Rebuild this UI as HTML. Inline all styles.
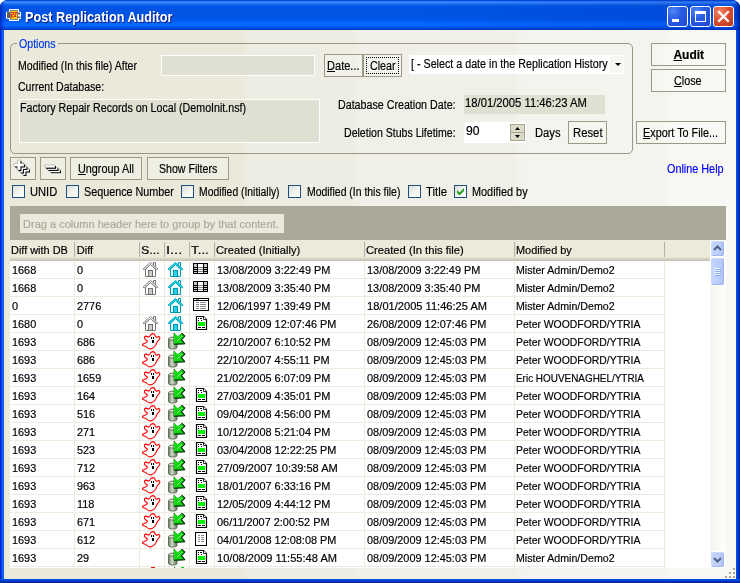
<!DOCTYPE html>
<html><head><meta charset="utf-8"><title>Post Replication Auditor</title>
<style>
html,body{margin:0;padding:0;}
body{width:740px;height:583px;overflow:hidden;background:#fff;position:relative;font-family:'Liberation Sans', sans-serif;font-size:11px;}
div{position:absolute;box-sizing:border-box;}
svg{position:absolute;overflow:visible;}
.t{position:absolute;white-space:nowrap;transform-origin:0 0;-webkit-text-stroke:0.18px currentColor;}

.btn{border:1px solid #9C9985;background:rgba(255,255,255,0.22);}
.chk{border:1px solid #1C5180;background:linear-gradient(135deg,#DCDCD7 0%,#F3F3EF 50%,#FFFFFF 100%);}

</style></head><body>
<div style="left:0px;top:0px;width:740px;height:583px;background:#0A3FD0;border-radius:8px 8px 0 0;"></div>
<div style="left:0px;top:0px;width:740px;height:30px;border-radius:8px 8px 0 0;background:linear-gradient(to bottom,#0040D0 0px,#0A50E0 0.8px,#2F80F8 1.6px,#3A8CFF 2.6px,#1A6EF2 4px,#0058E6 6px,#0054E3 9px,#0054E3 17px,#0058EA 20px,#0466FF 23px,#0466FF 25.5px,#005AF0 27px,#0046D8 28.5px,#0034BC 30px);"></div>
<div style="left:734px;top:1px;width:6px;height:29px;border-radius:0 8px 0 0;background:linear-gradient(to right,rgba(0,30,160,0) 0%,rgba(0,30,160,0.55) 60%,rgba(0,20,130,0.8) 100%);"></div>
<div style="left:0px;top:1px;width:5px;height:29px;border-radius:8px 0 0 0;background:linear-gradient(to left,rgba(0,30,180,0) 0%,rgba(0,30,190,0.5) 70%,rgba(0,25,170,0.7) 100%);"></div>
<div style="left:420px;top:0px;width:320px;height:30px;border-radius:0 8px 0 0;background:linear-gradient(to right,rgba(0,30,170,0) 0%,rgba(0,30,170,0.22) 100%);"></div>
<div style="left:0px;top:30px;width:4px;height:553px;background:linear-gradient(to right,#0019CF 0%,#0031E0 30%,#166AEE 60%,#0054E3 100%);"></div>
<div style="left:736px;top:30px;width:4px;height:553px;background:linear-gradient(to right,#0054E3 0%,#0042D8 40%,#001DA0 100%);"></div>
<div style="left:0px;top:579px;width:740px;height:4px;background:linear-gradient(to bottom,#0054E3 0%,#0040D0 40%,#001DA0 100%);"></div>
<div style="left:4px;top:30px;width:732px;height:549px;background:linear-gradient(to right,#EAE9DA 0px,#EAE9DA 238px,#EDEDE3 246px,#EDEDE3 346px,#F0F0E8 356px,#F0F0E8 508px,#F4F4EE 518px,#F4F4EE 656px,#F7F7F3 668px,#F7F7F3 732px);"></div>
<svg style="left:5px;top:8px" width="17" height="14" viewBox="5 8 17 14"><path d="M9 9 H19 V11.5 L21 12 V19 H19 V21 H9 V19 L6 18.5 V12 L9 11.5 Z" fill="#fff"/><rect x="7" y="12" width="3" height="6" fill="#5C5C5C"/><rect x="18" y="12.5" width="2" height="2" fill="#5C5C5C"/><rect x="18" y="16.5" width="2.5" height="1.5" fill="#5C5C5C"/><rect x="10" y="10" width="8" height="10" fill="#80888C"/><rect x="11" y="11" width="6" height="8" fill="#FFD400"/><path d="M11 12.5 H13.5 V14.5 H11.5 V17 H13.5 M14.5 12.5 H16.5 L14.5 16.5 H16.5" fill="none" stroke="#F02810" stroke-width="1.1"/></svg>
<div style="left:667px;top:6px;width:21px;height:21px;border:1px solid #fff;border-radius:3px;background:radial-gradient(circle at 28% 22%,#5088F6 0%,#2A5CE2 40%,#1C48D0 100%);"></div>
<div style="left:690px;top:6px;width:21px;height:21px;border:1px solid #fff;border-radius:3px;background:radial-gradient(circle at 28% 22%,#5088F6 0%,#2A5CE2 40%,#1C48D0 100%);"></div>
<div style="left:713px;top:6px;width:21px;height:21px;border:1px solid #fff;border-radius:3px;background:radial-gradient(circle at 30% 25%,#F08868 0%,#DC5030 45%,#B83418 100%);"></div>
<div style="left:672px;top:19px;width:7px;height:3px;background:#fff;"></div>
<div style="left:695px;top:11px;width:11px;height:11px;border:1px solid #fff;border-top:3px solid #fff;"></div>
<svg style="left:713px;top:6px" width="21" height="21" viewBox="0 0 21 21"><path d="M6 6 L15 15 M15 6 L6 15" stroke="#fff" stroke-width="2.2" stroke-linecap="square"/></svg>
<div style="left:10px;top:43px;width:623px;height:111px;border:1px solid #9A9884;border-radius:5px;"></div>
<div style="left:17px;top:39px;width:41px;height:10px;background:#EAE9DA;"></div>
<div style="left:161px;top:55px;width:154px;height:21px;border:1px solid #fff;background:#DFE0D1;"></div>
<div class="btn" style="left:324px;top:54px;width:39px;height:23px;"></div>
<div class="btn" style="left:363px;top:54px;width:39px;height:23px;"></div>
<div style="left:366px;top:57px;width:33px;height:17px;border:1px dotted #000;"></div>
<div style="left:409px;top:55px;width:215px;height:19px;background:#fff;"></div>
<div style="left:610px;top:56px;width:13px;height:17px;background:#F6F6F3;"></div>
<svg style="left:615px;top:63px" width="6" height="3" viewBox="0 0 6 3"><path d="M0 0 H6 L3 3 Z" fill="#000"/></svg>
<div style="left:19px;top:99px;width:301px;height:44px;border:1px solid #fff;background:#DFE0D1;"></div>
<div style="left:464px;top:95px;width:141px;height:19px;background:#DFE0D1;"></div>
<div style="left:464px;top:122px;width:62px;height:21px;background:#fff;"></div>
<div style="left:510px;top:124px;width:15px;height:9px;background:#DDDCCB;border:1px solid #A9A793;"></div>
<div style="left:510px;top:132px;width:15px;height:9px;background:#DDDCCB;border:1px solid #A9A793;"></div>
<svg style="left:515px;top:127px" width="5" height="3" viewBox="0 0 5 3"><path d="M0 3 H5 L2.5 0 Z" fill="#000"/></svg>
<svg style="left:515px;top:135px" width="5" height="3" viewBox="0 0 5 3"><path d="M0 0 H5 L2.5 3 Z" fill="#000"/></svg>
<div class="btn" style="left:568px;top:121px;width:39px;height:23px;"></div>
<div class="btn" style="left:651px;top:43px;width:75px;height:23px;"></div>
<div class="btn" style="left:651px;top:69px;width:75px;height:23px;"></div>
<div class="btn" style="left:636px;top:121px;width:90px;height:23px;"></div>
<div class="btn" style="left:10px;top:157px;width:26px;height:23px;"></div>
<div class="btn" style="left:40px;top:157px;width:26px;height:23px;"></div>
<div class="btn" style="left:70px;top:157px;width:72px;height:23px;"></div>
<div class="btn" style="left:147px;top:157px;width:82px;height:23px;"></div>
<svg style="left:14px;top:160.4px" width="18" height="18" viewBox="0 0 18 18"><path d="M3.5 0 H6.5 V3.5 H10 V6.5 H6.5 V10 H3.5 V6.5 H0 V3.5 H3.5 Z" transform="translate(6.0,6.0)" fill="#000"/><path d="M3.5 0 H6.5 V3.5 H10 V6.5 H6.5 V10 H3.5 V6.5 H0 V3.5 H3.5 Z" transform="translate(5.0,5.0)" fill="#fff" stroke="#555" stroke-width="0.35"/><path d="M3.5 0 H6.5 V3.5 H10 V6.5 H6.5 V10 H3.5 V6.5 H0 V3.5 H3.5 Z" transform="translate(3.5,3.5)" fill="#000"/><path d="M3.5 0 H6.5 V3.5 H10 V6.5 H6.5 V10 H3.5 V6.5 H0 V3.5 H3.5 Z" transform="translate(2.5,2.5)" fill="#fff" stroke="#555" stroke-width="0.35"/><path d="M3.5 0 H6.5 V3.5 H10 V6.5 H6.5 V10 H3.5 V6.5 H0 V3.5 H3.5 Z" transform="translate(1.0,1.0)" fill="#000"/><path d="M3.5 0 H6.5 V3.5 H10 V6.5 H6.5 V10 H3.5 V6.5 H0 V3.5 H3.5 Z" transform="translate(0.0,0.0)" fill="#fff" stroke="#555" stroke-width="0.35"/></svg>
<svg style="left:45.2px;top:164.5px" width="18" height="10" viewBox="0 0 18 10"><rect x="6.0" y="5.4" width="10" height="2.8" fill="#000"/><rect x="5.0" y="4.4" width="10" height="2.8" fill="#fff" stroke="#555" stroke-width="0.35"/><rect x="3.5" y="3.2" width="10" height="2.8" fill="#000"/><rect x="2.5" y="2.2" width="10" height="2.8" fill="#fff" stroke="#555" stroke-width="0.35"/><rect x="1.0" y="1.0" width="10" height="2.8" fill="#000"/><rect x="0.0" y="0.0" width="10" height="2.8" fill="#fff" stroke="#555" stroke-width="0.35"/></svg>
<div class="chk" style="left:12px;top:185px;width:13px;height:13px;"></div>
<div class="chk" style="left:66px;top:185px;width:13px;height:13px;"></div>
<div class="chk" style="left:181px;top:185px;width:13px;height:13px;"></div>
<div class="chk" style="left:288px;top:185px;width:13px;height:13px;"></div>
<div class="chk" style="left:408px;top:185px;width:13px;height:13px;"></div>
<div class="chk" style="left:454px;top:185px;width:13px;height:13px;"></div>
<svg style="left:457px;top:188px" width="7" height="7" viewBox="0 0 7 7"><path d="M0 2 V5 L2 7 H3 L7 3 V0 L2.5 4.5 Z" fill="#21A121"/></svg>
<div style="left:10px;top:206px;width:716px;height:362px;background:#fff;"></div>
<div style="left:10px;top:206px;width:716px;height:34px;background:#ACA899;"></div>
<div style="left:20px;top:214px;width:264px;height:19px;background:#EAE9DB;"></div>
<div style="left:10px;top:240px;width:700px;height:21px;background:linear-gradient(to bottom,#EBEADB 0px,#EBEADB 17px,#E2DECD 18px,#D6D2C2 19px,#CBC7B8 20px,#CBC7B8 21px);"></div>
<div style="left:74px;top:242px;width:2px;height:15px;background:#B5B3A1;border-right:1px solid rgba(255,255,255,0.65);"></div>
<div style="left:139px;top:242px;width:2px;height:15px;background:#B5B3A1;border-right:1px solid rgba(255,255,255,0.65);"></div>
<div style="left:164px;top:242px;width:2px;height:15px;background:#B5B3A1;border-right:1px solid rgba(255,255,255,0.65);"></div>
<div style="left:189px;top:242px;width:2px;height:15px;background:#B5B3A1;border-right:1px solid rgba(255,255,255,0.65);"></div>
<div style="left:214px;top:242px;width:2px;height:15px;background:#B5B3A1;border-right:1px solid rgba(255,255,255,0.65);"></div>
<div style="left:364px;top:242px;width:2px;height:15px;background:#B5B3A1;border-right:1px solid rgba(255,255,255,0.65);"></div>
<div style="left:514px;top:242px;width:2px;height:15px;background:#B5B3A1;border-right:1px solid rgba(255,255,255,0.65);"></div>
<div style="left:664px;top:242px;width:2px;height:15px;background:#B5B3A1;border-right:1px solid rgba(255,255,255,0.65);"></div>
<div style="left:710px;top:240px;width:16px;height:328px;background:linear-gradient(to right,#F5F4EF 0%,#FEFEFB 100%);"></div>
<div style="left:710px;top:240px;width:15px;height:17px;border:1px solid #fff;border-radius:3px;background:linear-gradient(to right,#C8D6FC 0%,#BACBFA 70%,#AEC0F4 100%);box-shadow:inset -1px -1px 0 #9FB5EE,inset 1px 1px 0 #CBD8FC;"></div>
<div style="left:710px;top:257px;width:15px;height:29px;border:1px solid #fff;border-radius:3px;background:linear-gradient(to right,#C8D6FC 0%,#BACBFA 70%,#AEC0F4 100%);box-shadow:inset -1px -1px 0 #9FB5EE,inset 1px 1px 0 #CBD8FC;"></div>
<div style="left:710px;top:551px;width:15px;height:17px;border:1px solid #fff;border-radius:3px;background:linear-gradient(to right,#C8D6FC 0%,#BACBFA 70%,#AEC0F4 100%);box-shadow:inset -1px -1px 0 #9FB5EE,inset 1px 1px 0 #CBD8FC;"></div>
<svg style="left:713px;top:245px" width="9" height="6" viewBox="0 0 9 6"><path d="M1 5 L4.5 1.5 L8 5" stroke="#4D6185" stroke-width="2" fill="none"/></svg>
<svg style="left:713px;top:557px" width="9" height="6" viewBox="0 0 9 6"><path d="M1 1 L4.5 4.5 L8 1" stroke="#4D6185" stroke-width="2" fill="none"/></svg>
<div style="left:714px;top:268px;width:6px;height:1px;background:#EEF4FE;"></div>
<div style="left:715px;top:269px;width:6px;height:1px;background:#8CB0F8;"></div>
<div style="left:714px;top:270px;width:6px;height:1px;background:#EEF4FE;"></div>
<div style="left:715px;top:271px;width:6px;height:1px;background:#8CB0F8;"></div>
<div style="left:714px;top:272px;width:6px;height:1px;background:#EEF4FE;"></div>
<div style="left:715px;top:273px;width:6px;height:1px;background:#8CB0F8;"></div>
<div style="left:714px;top:274px;width:6px;height:1px;background:#EEF4FE;"></div>
<div style="left:715px;top:275px;width:6px;height:1px;background:#8CB0F8;"></div>
<div style="left:733px;top:568px;width:2px;height:2px;background:#A5AA92;"></div>
<div style="left:729px;top:572px;width:2px;height:2px;background:#A5AA92;"></div>
<div style="left:733px;top:572px;width:2px;height:2px;background:#A5AA92;"></div>
<div style="left:725px;top:576px;width:2px;height:2px;background:#A5AA92;"></div>
<div style="left:729px;top:576px;width:2px;height:2px;background:#A5AA92;"></div>
<div style="left:733px;top:576px;width:2px;height:2px;background:#A5AA92;"></div>
<svg width="0" height="0" style="left:0;top:0"><defs><linearGradient id="cg" x1="0" x2="1" y1="0" y2="0"><stop offset="0" stop-color="#66765E"/><stop offset="0.4" stop-color="#D2DACA"/><stop offset="1" stop-color="#66765E"/></linearGradient></defs></svg>
<div style="left:10px;top:261px;width:655px;height:307px;background:repeating-linear-gradient(to bottom,transparent 0px,transparent 17px,#ECEBDD 17px,#ECEBDD 18px);"></div>
<div style="left:74px;top:261px;width:1px;height:307px;background:#ECEBDD;"></div>
<div style="left:139px;top:261px;width:1px;height:307px;background:#ECEBDD;"></div>
<div style="left:164px;top:261px;width:1px;height:307px;background:#ECEBDD;"></div>
<div style="left:189px;top:261px;width:1px;height:307px;background:#ECEBDD;"></div>
<div style="left:214px;top:261px;width:1px;height:307px;background:#ECEBDD;"></div>
<div style="left:364px;top:261px;width:1px;height:307px;background:#ECEBDD;"></div>
<div style="left:514px;top:261px;width:1px;height:307px;background:#ECEBDD;"></div>
<div style="left:664px;top:261px;width:1px;height:307px;background:#ECEBDD;"></div>
<svg style="left:143px;top:262px" width="15" height="15" viewBox="0 0 15 15"><path d="M2.5 7 V14.5 H12.5 V7 L7.5 2.5 Z" fill="#FFFFFF" stroke="#747474" stroke-width="1"/><path d="M10.5 3.2 V0.5 H12.5 V5.2" fill="#FFFFFF" stroke="#747474" stroke-width="1"/><path d="M7.5 0.4 L0.4 6.7 L0.4 7.6 L1.6 7.6 L7.5 2.6 L13.4 7.6 L14.6 7.6 L14.6 6.7 Z" fill="#FFFFFF" stroke="#747474" stroke-width="0.9" stroke-linejoin="round"/><rect x="5.5" y="8.5" width="4" height="6" fill="#C8D0C8" stroke="#707070" stroke-width="1"/></svg>
<svg style="left:168px;top:262px" width="15" height="15" viewBox="0 0 15 15"><path d="M2.5 7 V14.5 H12.5 V7 L7.5 2.5 Z" fill="#E4FCFF" stroke="#0098B0" stroke-width="1"/><path d="M10.5 3.2 V0.5 H12.5 V5.2" fill="#E4FCFF" stroke="#0098B0" stroke-width="1"/><path d="M7.5 0.4 L0.4 6.7 L0.4 7.6 L1.6 7.6 L7.5 2.6 L13.4 7.6 L14.6 7.6 L14.6 6.7 Z" fill="#10E4F4" stroke="#0098B0" stroke-width="0.9" stroke-linejoin="round"/><rect x="5.5" y="8.5" width="4" height="6" fill="#20D4F4" stroke="#0090A8" stroke-width="1"/></svg>
<svg style="left:193px;top:263px" width="15" height="11" viewBox="0 0 15 11" shape-rendering="crispEdges"><rect x="0" y="0" width="15" height="11" fill="#000"/><rect x="1" y="1" width="3" height="3" fill="#C8C8C8"/><rect x="1" y="5" width="3" height="1" fill="#C8C8C8"/><rect x="1" y="7" width="3" height="1" fill="#C8C8C8"/><rect x="1" y="9" width="3" height="1" fill="#C8C8C8"/><rect x="11" y="1" width="3" height="3" fill="#C8C8C8"/><rect x="11" y="5" width="3" height="1" fill="#C8C8C8"/><rect x="11" y="7" width="3" height="1" fill="#C8C8C8"/><rect x="11" y="9" width="3" height="1" fill="#C8C8C8"/><rect x="5" y="1" width="5" height="9" fill="#fff"/><rect x="5" y="4" width="5" height="1" fill="#8A8A8A"/><rect x="5" y="6" width="5" height="1" fill="#8A8A8A"/><rect x="5" y="8" width="5" height="1" fill="#8A8A8A"/></svg>
<svg style="left:143px;top:280px" width="15" height="15" viewBox="0 0 15 15"><path d="M2.5 7 V14.5 H12.5 V7 L7.5 2.5 Z" fill="#FFFFFF" stroke="#747474" stroke-width="1"/><path d="M10.5 3.2 V0.5 H12.5 V5.2" fill="#FFFFFF" stroke="#747474" stroke-width="1"/><path d="M7.5 0.4 L0.4 6.7 L0.4 7.6 L1.6 7.6 L7.5 2.6 L13.4 7.6 L14.6 7.6 L14.6 6.7 Z" fill="#FFFFFF" stroke="#747474" stroke-width="0.9" stroke-linejoin="round"/><rect x="5.5" y="8.5" width="4" height="6" fill="#C8D0C8" stroke="#707070" stroke-width="1"/></svg>
<svg style="left:168px;top:280px" width="15" height="15" viewBox="0 0 15 15"><path d="M2.5 7 V14.5 H12.5 V7 L7.5 2.5 Z" fill="#E4FCFF" stroke="#0098B0" stroke-width="1"/><path d="M10.5 3.2 V0.5 H12.5 V5.2" fill="#E4FCFF" stroke="#0098B0" stroke-width="1"/><path d="M7.5 0.4 L0.4 6.7 L0.4 7.6 L1.6 7.6 L7.5 2.6 L13.4 7.6 L14.6 7.6 L14.6 6.7 Z" fill="#10E4F4" stroke="#0098B0" stroke-width="0.9" stroke-linejoin="round"/><rect x="5.5" y="8.5" width="4" height="6" fill="#20D4F4" stroke="#0090A8" stroke-width="1"/></svg>
<svg style="left:193px;top:281px" width="15" height="11" viewBox="0 0 15 11" shape-rendering="crispEdges"><rect x="0" y="0" width="15" height="11" fill="#000"/><rect x="1" y="1" width="3" height="3" fill="#C8C8C8"/><rect x="1" y="5" width="3" height="1" fill="#C8C8C8"/><rect x="1" y="7" width="3" height="1" fill="#C8C8C8"/><rect x="1" y="9" width="3" height="1" fill="#C8C8C8"/><rect x="11" y="1" width="3" height="3" fill="#C8C8C8"/><rect x="11" y="5" width="3" height="1" fill="#C8C8C8"/><rect x="11" y="7" width="3" height="1" fill="#C8C8C8"/><rect x="11" y="9" width="3" height="1" fill="#C8C8C8"/><rect x="5" y="1" width="5" height="9" fill="#fff"/><rect x="5" y="4" width="5" height="1" fill="#8A8A8A"/><rect x="5" y="6" width="5" height="1" fill="#8A8A8A"/><rect x="5" y="8" width="5" height="1" fill="#8A8A8A"/></svg>
<svg style="left:168px;top:298px" width="15" height="15" viewBox="0 0 15 15"><path d="M2.5 7 V14.5 H12.5 V7 L7.5 2.5 Z" fill="#E4FCFF" stroke="#0098B0" stroke-width="1"/><path d="M10.5 3.2 V0.5 H12.5 V5.2" fill="#E4FCFF" stroke="#0098B0" stroke-width="1"/><path d="M7.5 0.4 L0.4 6.7 L0.4 7.6 L1.6 7.6 L7.5 2.6 L13.4 7.6 L14.6 7.6 L14.6 6.7 Z" fill="#10E4F4" stroke="#0098B0" stroke-width="0.9" stroke-linejoin="round"/><rect x="5.5" y="8.5" width="4" height="6" fill="#20D4F4" stroke="#0090A8" stroke-width="1"/></svg>
<svg style="left:193px;top:298px" width="16" height="13" viewBox="0 0 16 13" shape-rendering="crispEdges"><rect x="0.5" y="0.5" width="15" height="12" fill="#fff" stroke="#000"/><rect x="1" y="2" width="14" height="1" fill="#000"/><rect x="3" y="1" width="3" height="1" fill="#888"/><rect x="3" y="4" width="3" height="1" fill="#8C8C8C"/><rect x="7" y="4" width="6" height="1" fill="#8C8C8C"/><rect x="3" y="6" width="3" height="1" fill="#8C8C8C"/><rect x="7" y="6" width="6" height="1" fill="#8C8C8C"/><rect x="3" y="8" width="3" height="1" fill="#8C8C8C"/><rect x="7" y="8" width="6" height="1" fill="#8C8C8C"/><rect x="3" y="10" width="3" height="1" fill="#8C8C8C"/><rect x="7" y="10" width="6" height="1" fill="#8C8C8C"/></svg>
<svg style="left:143px;top:316px" width="15" height="15" viewBox="0 0 15 15"><path d="M2.5 7 V14.5 H12.5 V7 L7.5 2.5 Z" fill="#FFFFFF" stroke="#747474" stroke-width="1"/><path d="M10.5 3.2 V0.5 H12.5 V5.2" fill="#FFFFFF" stroke="#747474" stroke-width="1"/><path d="M7.5 0.4 L0.4 6.7 L0.4 7.6 L1.6 7.6 L7.5 2.6 L13.4 7.6 L14.6 7.6 L14.6 6.7 Z" fill="#FFFFFF" stroke="#747474" stroke-width="0.9" stroke-linejoin="round"/><rect x="5.5" y="8.5" width="4" height="6" fill="#C8D0C8" stroke="#707070" stroke-width="1"/></svg>
<svg style="left:168px;top:316px" width="15" height="15" viewBox="0 0 15 15"><path d="M2.5 7 V14.5 H12.5 V7 L7.5 2.5 Z" fill="#E4FCFF" stroke="#0098B0" stroke-width="1"/><path d="M10.5 3.2 V0.5 H12.5 V5.2" fill="#E4FCFF" stroke="#0098B0" stroke-width="1"/><path d="M7.5 0.4 L0.4 6.7 L0.4 7.6 L1.6 7.6 L7.5 2.6 L13.4 7.6 L14.6 7.6 L14.6 6.7 Z" fill="#10E4F4" stroke="#0098B0" stroke-width="0.9" stroke-linejoin="round"/><rect x="5.5" y="8.5" width="4" height="6" fill="#20D4F4" stroke="#0090A8" stroke-width="1"/></svg>
<svg style="left:196px;top:316px" width="11" height="14" viewBox="0 0 11 14"><path d="M0.5 0.5 H7.5 L10.5 3.5 V13.5 H0.5 Z" fill="#fff" stroke="#000" stroke-width="1.2"/><path d="M7.5 0.5 V3.5 H10.5" fill="#fff" stroke="#000" stroke-width="0.8"/><rect x="2" y="6" width="7" height="4" fill="#00F000"/><rect x="2" y="2" width="1" height="1" fill="#000"/><rect x="4" y="2" width="2" height="1" fill="#000"/><rect x="2" y="4" width="1" height="1" fill="#000"/><rect x="5" y="4" width="1" height="1" fill="#000"/><rect x="2" y="11" width="3" height="1" fill="#000"/><rect x="6" y="11" width="3" height="1" fill="#000"/></svg>
<svg style="left:142px;top:333px" width="19" height="17" viewBox="0 0 19 17"><path d="M10.5 0.6 Q9 0.8 8.1 2.7 Q7.4 3.9 6.1 4.1 Q4.8 3.2 3.7 3.1 Q2.4 3.4 2.4 4.4 Q2.4 5.4 3.1 6.1 Q4.2 7.4 5.4 8.1 Q5 9.2 4.1 9.8 Q2 10.4 0.5 11.2 Q0.4 12 1 12.5 Q2.2 13 3.4 13.2 Q4.4 14.2 5.4 14.9 Q6.8 15.8 8.1 15.9 Q10 15.6 11.5 14.6 Q12.7 13.7 13.5 12.5 Q14.4 11 14.9 9.5 Q15.8 8 16.9 6.8 Q17.7 5.8 17.9 4.8 Q17.7 3.7 16.9 3.4 Q15.8 3.7 14.9 4.4 Q13.8 3.9 13.2 3.1 Q13 1.8 12.2 1 Q11.4 0.6 10.5 0.6 Z" fill="#fff" stroke="#FF0000" stroke-width="1.1" stroke-linejoin="round"/><rect x="9" y="4" width="1" height="2" fill="#000"/><rect x="11" y="4" width="1" height="2" fill="#000"/><rect x="10" y="7" width="2" height="3" fill="#000"/></svg>
<svg style="left:168px;top:333px" width="18" height="17" viewBox="0 0 18 17"><path d="M0.5 5.6 V14.4 C0.5 16.6 9 16.6 9 14.4 V5.6 Z" fill="url(#cg)" stroke="#56664E" stroke-width="0.9"/><ellipse cx="4.75" cy="5.6" rx="4.25" ry="1.5" fill="#DCE2D4" stroke="#56664E" stroke-width="0.9"/><path d="M6.1 0.2 L9.8 3.7 L13.9 0.4 L16.9 3.1 L13.4 6.6 L16.7 10.7 L6.1 11.2 Z" fill="#0FD60F" stroke="#0A5A0A" stroke-width="0.9" stroke-linejoin="round"/><path d="M6.6 1.2 L6.6 10.6 M7 1 L10 4 L14 1" fill="none" stroke="#20F020" stroke-width="0.9"/><path d="M13.9 0.4 L16.9 3.1 L13.4 6.6 L16.7 10.7 L6.1 11.2" fill="none" stroke="#053805" stroke-width="1.1" stroke-linejoin="round"/><path d="M14.2 3 L9.4 7.8" stroke="#B8FFB8" stroke-width="0.8"/></svg>
<svg style="left:142px;top:351px" width="19" height="17" viewBox="0 0 19 17"><path d="M10.5 0.6 Q9 0.8 8.1 2.7 Q7.4 3.9 6.1 4.1 Q4.8 3.2 3.7 3.1 Q2.4 3.4 2.4 4.4 Q2.4 5.4 3.1 6.1 Q4.2 7.4 5.4 8.1 Q5 9.2 4.1 9.8 Q2 10.4 0.5 11.2 Q0.4 12 1 12.5 Q2.2 13 3.4 13.2 Q4.4 14.2 5.4 14.9 Q6.8 15.8 8.1 15.9 Q10 15.6 11.5 14.6 Q12.7 13.7 13.5 12.5 Q14.4 11 14.9 9.5 Q15.8 8 16.9 6.8 Q17.7 5.8 17.9 4.8 Q17.7 3.7 16.9 3.4 Q15.8 3.7 14.9 4.4 Q13.8 3.9 13.2 3.1 Q13 1.8 12.2 1 Q11.4 0.6 10.5 0.6 Z" fill="#fff" stroke="#FF0000" stroke-width="1.1" stroke-linejoin="round"/><rect x="9" y="4" width="1" height="2" fill="#000"/><rect x="11" y="4" width="1" height="2" fill="#000"/><rect x="10" y="7" width="2" height="3" fill="#000"/></svg>
<svg style="left:168px;top:351px" width="18" height="17" viewBox="0 0 18 17"><path d="M0.5 5.6 V14.4 C0.5 16.6 9 16.6 9 14.4 V5.6 Z" fill="url(#cg)" stroke="#56664E" stroke-width="0.9"/><ellipse cx="4.75" cy="5.6" rx="4.25" ry="1.5" fill="#DCE2D4" stroke="#56664E" stroke-width="0.9"/><path d="M6.1 0.2 L9.8 3.7 L13.9 0.4 L16.9 3.1 L13.4 6.6 L16.7 10.7 L6.1 11.2 Z" fill="#0FD60F" stroke="#0A5A0A" stroke-width="0.9" stroke-linejoin="round"/><path d="M6.6 1.2 L6.6 10.6 M7 1 L10 4 L14 1" fill="none" stroke="#20F020" stroke-width="0.9"/><path d="M13.9 0.4 L16.9 3.1 L13.4 6.6 L16.7 10.7 L6.1 11.2" fill="none" stroke="#053805" stroke-width="1.1" stroke-linejoin="round"/><path d="M14.2 3 L9.4 7.8" stroke="#B8FFB8" stroke-width="0.8"/></svg>
<svg style="left:142px;top:369px" width="19" height="17" viewBox="0 0 19 17"><path d="M10.5 0.6 Q9 0.8 8.1 2.7 Q7.4 3.9 6.1 4.1 Q4.8 3.2 3.7 3.1 Q2.4 3.4 2.4 4.4 Q2.4 5.4 3.1 6.1 Q4.2 7.4 5.4 8.1 Q5 9.2 4.1 9.8 Q2 10.4 0.5 11.2 Q0.4 12 1 12.5 Q2.2 13 3.4 13.2 Q4.4 14.2 5.4 14.9 Q6.8 15.8 8.1 15.9 Q10 15.6 11.5 14.6 Q12.7 13.7 13.5 12.5 Q14.4 11 14.9 9.5 Q15.8 8 16.9 6.8 Q17.7 5.8 17.9 4.8 Q17.7 3.7 16.9 3.4 Q15.8 3.7 14.9 4.4 Q13.8 3.9 13.2 3.1 Q13 1.8 12.2 1 Q11.4 0.6 10.5 0.6 Z" fill="#fff" stroke="#FF0000" stroke-width="1.1" stroke-linejoin="round"/><rect x="9" y="4" width="1" height="2" fill="#000"/><rect x="11" y="4" width="1" height="2" fill="#000"/><rect x="10" y="7" width="2" height="3" fill="#000"/></svg>
<svg style="left:168px;top:369px" width="18" height="17" viewBox="0 0 18 17"><path d="M0.5 5.6 V14.4 C0.5 16.6 9 16.6 9 14.4 V5.6 Z" fill="url(#cg)" stroke="#56664E" stroke-width="0.9"/><ellipse cx="4.75" cy="5.6" rx="4.25" ry="1.5" fill="#DCE2D4" stroke="#56664E" stroke-width="0.9"/><path d="M6.1 0.2 L9.8 3.7 L13.9 0.4 L16.9 3.1 L13.4 6.6 L16.7 10.7 L6.1 11.2 Z" fill="#0FD60F" stroke="#0A5A0A" stroke-width="0.9" stroke-linejoin="round"/><path d="M6.6 1.2 L6.6 10.6 M7 1 L10 4 L14 1" fill="none" stroke="#20F020" stroke-width="0.9"/><path d="M13.9 0.4 L16.9 3.1 L13.4 6.6 L16.7 10.7 L6.1 11.2" fill="none" stroke="#053805" stroke-width="1.1" stroke-linejoin="round"/><path d="M14.2 3 L9.4 7.8" stroke="#B8FFB8" stroke-width="0.8"/></svg>
<svg style="left:142px;top:387px" width="19" height="17" viewBox="0 0 19 17"><path d="M10.5 0.6 Q9 0.8 8.1 2.7 Q7.4 3.9 6.1 4.1 Q4.8 3.2 3.7 3.1 Q2.4 3.4 2.4 4.4 Q2.4 5.4 3.1 6.1 Q4.2 7.4 5.4 8.1 Q5 9.2 4.1 9.8 Q2 10.4 0.5 11.2 Q0.4 12 1 12.5 Q2.2 13 3.4 13.2 Q4.4 14.2 5.4 14.9 Q6.8 15.8 8.1 15.9 Q10 15.6 11.5 14.6 Q12.7 13.7 13.5 12.5 Q14.4 11 14.9 9.5 Q15.8 8 16.9 6.8 Q17.7 5.8 17.9 4.8 Q17.7 3.7 16.9 3.4 Q15.8 3.7 14.9 4.4 Q13.8 3.9 13.2 3.1 Q13 1.8 12.2 1 Q11.4 0.6 10.5 0.6 Z" fill="#fff" stroke="#FF0000" stroke-width="1.1" stroke-linejoin="round"/><rect x="9" y="4" width="1" height="2" fill="#000"/><rect x="11" y="4" width="1" height="2" fill="#000"/><rect x="10" y="7" width="2" height="3" fill="#000"/></svg>
<svg style="left:168px;top:387px" width="18" height="17" viewBox="0 0 18 17"><path d="M0.5 5.6 V14.4 C0.5 16.6 9 16.6 9 14.4 V5.6 Z" fill="url(#cg)" stroke="#56664E" stroke-width="0.9"/><ellipse cx="4.75" cy="5.6" rx="4.25" ry="1.5" fill="#DCE2D4" stroke="#56664E" stroke-width="0.9"/><path d="M6.1 0.2 L9.8 3.7 L13.9 0.4 L16.9 3.1 L13.4 6.6 L16.7 10.7 L6.1 11.2 Z" fill="#0FD60F" stroke="#0A5A0A" stroke-width="0.9" stroke-linejoin="round"/><path d="M6.6 1.2 L6.6 10.6 M7 1 L10 4 L14 1" fill="none" stroke="#20F020" stroke-width="0.9"/><path d="M13.9 0.4 L16.9 3.1 L13.4 6.6 L16.7 10.7 L6.1 11.2" fill="none" stroke="#053805" stroke-width="1.1" stroke-linejoin="round"/><path d="M14.2 3 L9.4 7.8" stroke="#B8FFB8" stroke-width="0.8"/></svg>
<svg style="left:196px;top:388px" width="11" height="14" viewBox="0 0 11 14"><path d="M0.5 0.5 H7.5 L10.5 3.5 V13.5 H0.5 Z" fill="#fff" stroke="#000" stroke-width="1.2"/><path d="M7.5 0.5 V3.5 H10.5" fill="#fff" stroke="#000" stroke-width="0.8"/><rect x="2" y="6" width="7" height="4" fill="#00F000"/><rect x="2" y="2" width="1" height="1" fill="#000"/><rect x="4" y="2" width="2" height="1" fill="#000"/><rect x="2" y="4" width="1" height="1" fill="#000"/><rect x="5" y="4" width="1" height="1" fill="#000"/><rect x="2" y="11" width="3" height="1" fill="#000"/><rect x="6" y="11" width="3" height="1" fill="#000"/></svg>
<svg style="left:142px;top:405px" width="19" height="17" viewBox="0 0 19 17"><path d="M10.5 0.6 Q9 0.8 8.1 2.7 Q7.4 3.9 6.1 4.1 Q4.8 3.2 3.7 3.1 Q2.4 3.4 2.4 4.4 Q2.4 5.4 3.1 6.1 Q4.2 7.4 5.4 8.1 Q5 9.2 4.1 9.8 Q2 10.4 0.5 11.2 Q0.4 12 1 12.5 Q2.2 13 3.4 13.2 Q4.4 14.2 5.4 14.9 Q6.8 15.8 8.1 15.9 Q10 15.6 11.5 14.6 Q12.7 13.7 13.5 12.5 Q14.4 11 14.9 9.5 Q15.8 8 16.9 6.8 Q17.7 5.8 17.9 4.8 Q17.7 3.7 16.9 3.4 Q15.8 3.7 14.9 4.4 Q13.8 3.9 13.2 3.1 Q13 1.8 12.2 1 Q11.4 0.6 10.5 0.6 Z" fill="#fff" stroke="#FF0000" stroke-width="1.1" stroke-linejoin="round"/><rect x="9" y="4" width="1" height="2" fill="#000"/><rect x="11" y="4" width="1" height="2" fill="#000"/><rect x="10" y="7" width="2" height="3" fill="#000"/></svg>
<svg style="left:168px;top:405px" width="18" height="17" viewBox="0 0 18 17"><path d="M0.5 5.6 V14.4 C0.5 16.6 9 16.6 9 14.4 V5.6 Z" fill="url(#cg)" stroke="#56664E" stroke-width="0.9"/><ellipse cx="4.75" cy="5.6" rx="4.25" ry="1.5" fill="#DCE2D4" stroke="#56664E" stroke-width="0.9"/><path d="M6.1 0.2 L9.8 3.7 L13.9 0.4 L16.9 3.1 L13.4 6.6 L16.7 10.7 L6.1 11.2 Z" fill="#0FD60F" stroke="#0A5A0A" stroke-width="0.9" stroke-linejoin="round"/><path d="M6.6 1.2 L6.6 10.6 M7 1 L10 4 L14 1" fill="none" stroke="#20F020" stroke-width="0.9"/><path d="M13.9 0.4 L16.9 3.1 L13.4 6.6 L16.7 10.7 L6.1 11.2" fill="none" stroke="#053805" stroke-width="1.1" stroke-linejoin="round"/><path d="M14.2 3 L9.4 7.8" stroke="#B8FFB8" stroke-width="0.8"/></svg>
<svg style="left:196px;top:406px" width="11" height="14" viewBox="0 0 11 14"><path d="M0.5 0.5 H7.5 L10.5 3.5 V13.5 H0.5 Z" fill="#fff" stroke="#000" stroke-width="1.2"/><path d="M7.5 0.5 V3.5 H10.5" fill="#fff" stroke="#000" stroke-width="0.8"/><rect x="2" y="6" width="7" height="4" fill="#00F000"/><rect x="2" y="2" width="1" height="1" fill="#000"/><rect x="4" y="2" width="2" height="1" fill="#000"/><rect x="2" y="4" width="1" height="1" fill="#000"/><rect x="5" y="4" width="1" height="1" fill="#000"/><rect x="2" y="11" width="3" height="1" fill="#000"/><rect x="6" y="11" width="3" height="1" fill="#000"/></svg>
<svg style="left:142px;top:423px" width="19" height="17" viewBox="0 0 19 17"><path d="M10.5 0.6 Q9 0.8 8.1 2.7 Q7.4 3.9 6.1 4.1 Q4.8 3.2 3.7 3.1 Q2.4 3.4 2.4 4.4 Q2.4 5.4 3.1 6.1 Q4.2 7.4 5.4 8.1 Q5 9.2 4.1 9.8 Q2 10.4 0.5 11.2 Q0.4 12 1 12.5 Q2.2 13 3.4 13.2 Q4.4 14.2 5.4 14.9 Q6.8 15.8 8.1 15.9 Q10 15.6 11.5 14.6 Q12.7 13.7 13.5 12.5 Q14.4 11 14.9 9.5 Q15.8 8 16.9 6.8 Q17.7 5.8 17.9 4.8 Q17.7 3.7 16.9 3.4 Q15.8 3.7 14.9 4.4 Q13.8 3.9 13.2 3.1 Q13 1.8 12.2 1 Q11.4 0.6 10.5 0.6 Z" fill="#fff" stroke="#FF0000" stroke-width="1.1" stroke-linejoin="round"/><rect x="9" y="4" width="1" height="2" fill="#000"/><rect x="11" y="4" width="1" height="2" fill="#000"/><rect x="10" y="7" width="2" height="3" fill="#000"/></svg>
<svg style="left:168px;top:423px" width="18" height="17" viewBox="0 0 18 17"><path d="M0.5 5.6 V14.4 C0.5 16.6 9 16.6 9 14.4 V5.6 Z" fill="url(#cg)" stroke="#56664E" stroke-width="0.9"/><ellipse cx="4.75" cy="5.6" rx="4.25" ry="1.5" fill="#DCE2D4" stroke="#56664E" stroke-width="0.9"/><path d="M6.1 0.2 L9.8 3.7 L13.9 0.4 L16.9 3.1 L13.4 6.6 L16.7 10.7 L6.1 11.2 Z" fill="#0FD60F" stroke="#0A5A0A" stroke-width="0.9" stroke-linejoin="round"/><path d="M6.6 1.2 L6.6 10.6 M7 1 L10 4 L14 1" fill="none" stroke="#20F020" stroke-width="0.9"/><path d="M13.9 0.4 L16.9 3.1 L13.4 6.6 L16.7 10.7 L6.1 11.2" fill="none" stroke="#053805" stroke-width="1.1" stroke-linejoin="round"/><path d="M14.2 3 L9.4 7.8" stroke="#B8FFB8" stroke-width="0.8"/></svg>
<svg style="left:196px;top:424px" width="11" height="14" viewBox="0 0 11 14"><path d="M0.5 0.5 H7.5 L10.5 3.5 V13.5 H0.5 Z" fill="#fff" stroke="#000" stroke-width="1.2"/><path d="M7.5 0.5 V3.5 H10.5" fill="#fff" stroke="#000" stroke-width="0.8"/><rect x="2" y="6" width="7" height="4" fill="#00F000"/><rect x="2" y="2" width="1" height="1" fill="#000"/><rect x="4" y="2" width="2" height="1" fill="#000"/><rect x="2" y="4" width="1" height="1" fill="#000"/><rect x="5" y="4" width="1" height="1" fill="#000"/><rect x="2" y="11" width="3" height="1" fill="#000"/><rect x="6" y="11" width="3" height="1" fill="#000"/></svg>
<svg style="left:142px;top:441px" width="19" height="17" viewBox="0 0 19 17"><path d="M10.5 0.6 Q9 0.8 8.1 2.7 Q7.4 3.9 6.1 4.1 Q4.8 3.2 3.7 3.1 Q2.4 3.4 2.4 4.4 Q2.4 5.4 3.1 6.1 Q4.2 7.4 5.4 8.1 Q5 9.2 4.1 9.8 Q2 10.4 0.5 11.2 Q0.4 12 1 12.5 Q2.2 13 3.4 13.2 Q4.4 14.2 5.4 14.9 Q6.8 15.8 8.1 15.9 Q10 15.6 11.5 14.6 Q12.7 13.7 13.5 12.5 Q14.4 11 14.9 9.5 Q15.8 8 16.9 6.8 Q17.7 5.8 17.9 4.8 Q17.7 3.7 16.9 3.4 Q15.8 3.7 14.9 4.4 Q13.8 3.9 13.2 3.1 Q13 1.8 12.2 1 Q11.4 0.6 10.5 0.6 Z" fill="#fff" stroke="#FF0000" stroke-width="1.1" stroke-linejoin="round"/><rect x="9" y="4" width="1" height="2" fill="#000"/><rect x="11" y="4" width="1" height="2" fill="#000"/><rect x="10" y="7" width="2" height="3" fill="#000"/></svg>
<svg style="left:168px;top:441px" width="18" height="17" viewBox="0 0 18 17"><path d="M0.5 5.6 V14.4 C0.5 16.6 9 16.6 9 14.4 V5.6 Z" fill="url(#cg)" stroke="#56664E" stroke-width="0.9"/><ellipse cx="4.75" cy="5.6" rx="4.25" ry="1.5" fill="#DCE2D4" stroke="#56664E" stroke-width="0.9"/><path d="M6.1 0.2 L9.8 3.7 L13.9 0.4 L16.9 3.1 L13.4 6.6 L16.7 10.7 L6.1 11.2 Z" fill="#0FD60F" stroke="#0A5A0A" stroke-width="0.9" stroke-linejoin="round"/><path d="M6.6 1.2 L6.6 10.6 M7 1 L10 4 L14 1" fill="none" stroke="#20F020" stroke-width="0.9"/><path d="M13.9 0.4 L16.9 3.1 L13.4 6.6 L16.7 10.7 L6.1 11.2" fill="none" stroke="#053805" stroke-width="1.1" stroke-linejoin="round"/><path d="M14.2 3 L9.4 7.8" stroke="#B8FFB8" stroke-width="0.8"/></svg>
<svg style="left:196px;top:442px" width="11" height="14" viewBox="0 0 11 14"><path d="M0.5 0.5 H7.5 L10.5 3.5 V13.5 H0.5 Z" fill="#fff" stroke="#000" stroke-width="1.2"/><path d="M7.5 0.5 V3.5 H10.5" fill="#fff" stroke="#000" stroke-width="0.8"/><rect x="2" y="6" width="7" height="4" fill="#00F000"/><rect x="2" y="2" width="1" height="1" fill="#000"/><rect x="4" y="2" width="2" height="1" fill="#000"/><rect x="2" y="4" width="1" height="1" fill="#000"/><rect x="5" y="4" width="1" height="1" fill="#000"/><rect x="2" y="11" width="3" height="1" fill="#000"/><rect x="6" y="11" width="3" height="1" fill="#000"/></svg>
<svg style="left:142px;top:459px" width="19" height="17" viewBox="0 0 19 17"><path d="M10.5 0.6 Q9 0.8 8.1 2.7 Q7.4 3.9 6.1 4.1 Q4.8 3.2 3.7 3.1 Q2.4 3.4 2.4 4.4 Q2.4 5.4 3.1 6.1 Q4.2 7.4 5.4 8.1 Q5 9.2 4.1 9.8 Q2 10.4 0.5 11.2 Q0.4 12 1 12.5 Q2.2 13 3.4 13.2 Q4.4 14.2 5.4 14.9 Q6.8 15.8 8.1 15.9 Q10 15.6 11.5 14.6 Q12.7 13.7 13.5 12.5 Q14.4 11 14.9 9.5 Q15.8 8 16.9 6.8 Q17.7 5.8 17.9 4.8 Q17.7 3.7 16.9 3.4 Q15.8 3.7 14.9 4.4 Q13.8 3.9 13.2 3.1 Q13 1.8 12.2 1 Q11.4 0.6 10.5 0.6 Z" fill="#fff" stroke="#FF0000" stroke-width="1.1" stroke-linejoin="round"/><rect x="9" y="4" width="1" height="2" fill="#000"/><rect x="11" y="4" width="1" height="2" fill="#000"/><rect x="10" y="7" width="2" height="3" fill="#000"/></svg>
<svg style="left:168px;top:459px" width="18" height="17" viewBox="0 0 18 17"><path d="M0.5 5.6 V14.4 C0.5 16.6 9 16.6 9 14.4 V5.6 Z" fill="url(#cg)" stroke="#56664E" stroke-width="0.9"/><ellipse cx="4.75" cy="5.6" rx="4.25" ry="1.5" fill="#DCE2D4" stroke="#56664E" stroke-width="0.9"/><path d="M6.1 0.2 L9.8 3.7 L13.9 0.4 L16.9 3.1 L13.4 6.6 L16.7 10.7 L6.1 11.2 Z" fill="#0FD60F" stroke="#0A5A0A" stroke-width="0.9" stroke-linejoin="round"/><path d="M6.6 1.2 L6.6 10.6 M7 1 L10 4 L14 1" fill="none" stroke="#20F020" stroke-width="0.9"/><path d="M13.9 0.4 L16.9 3.1 L13.4 6.6 L16.7 10.7 L6.1 11.2" fill="none" stroke="#053805" stroke-width="1.1" stroke-linejoin="round"/><path d="M14.2 3 L9.4 7.8" stroke="#B8FFB8" stroke-width="0.8"/></svg>
<svg style="left:196px;top:460px" width="11" height="14" viewBox="0 0 11 14"><path d="M0.5 0.5 H7.5 L10.5 3.5 V13.5 H0.5 Z" fill="#fff" stroke="#000" stroke-width="1.2"/><path d="M7.5 0.5 V3.5 H10.5" fill="#fff" stroke="#000" stroke-width="0.8"/><rect x="2" y="6" width="7" height="4" fill="#00F000"/><rect x="2" y="2" width="1" height="1" fill="#000"/><rect x="4" y="2" width="2" height="1" fill="#000"/><rect x="2" y="4" width="1" height="1" fill="#000"/><rect x="5" y="4" width="1" height="1" fill="#000"/><rect x="2" y="11" width="3" height="1" fill="#000"/><rect x="6" y="11" width="3" height="1" fill="#000"/></svg>
<svg style="left:142px;top:477px" width="19" height="17" viewBox="0 0 19 17"><path d="M10.5 0.6 Q9 0.8 8.1 2.7 Q7.4 3.9 6.1 4.1 Q4.8 3.2 3.7 3.1 Q2.4 3.4 2.4 4.4 Q2.4 5.4 3.1 6.1 Q4.2 7.4 5.4 8.1 Q5 9.2 4.1 9.8 Q2 10.4 0.5 11.2 Q0.4 12 1 12.5 Q2.2 13 3.4 13.2 Q4.4 14.2 5.4 14.9 Q6.8 15.8 8.1 15.9 Q10 15.6 11.5 14.6 Q12.7 13.7 13.5 12.5 Q14.4 11 14.9 9.5 Q15.8 8 16.9 6.8 Q17.7 5.8 17.9 4.8 Q17.7 3.7 16.9 3.4 Q15.8 3.7 14.9 4.4 Q13.8 3.9 13.2 3.1 Q13 1.8 12.2 1 Q11.4 0.6 10.5 0.6 Z" fill="#fff" stroke="#FF0000" stroke-width="1.1" stroke-linejoin="round"/><rect x="9" y="4" width="1" height="2" fill="#000"/><rect x="11" y="4" width="1" height="2" fill="#000"/><rect x="10" y="7" width="2" height="3" fill="#000"/></svg>
<svg style="left:168px;top:477px" width="18" height="17" viewBox="0 0 18 17"><path d="M0.5 5.6 V14.4 C0.5 16.6 9 16.6 9 14.4 V5.6 Z" fill="url(#cg)" stroke="#56664E" stroke-width="0.9"/><ellipse cx="4.75" cy="5.6" rx="4.25" ry="1.5" fill="#DCE2D4" stroke="#56664E" stroke-width="0.9"/><path d="M6.1 0.2 L9.8 3.7 L13.9 0.4 L16.9 3.1 L13.4 6.6 L16.7 10.7 L6.1 11.2 Z" fill="#0FD60F" stroke="#0A5A0A" stroke-width="0.9" stroke-linejoin="round"/><path d="M6.6 1.2 L6.6 10.6 M7 1 L10 4 L14 1" fill="none" stroke="#20F020" stroke-width="0.9"/><path d="M13.9 0.4 L16.9 3.1 L13.4 6.6 L16.7 10.7 L6.1 11.2" fill="none" stroke="#053805" stroke-width="1.1" stroke-linejoin="round"/><path d="M14.2 3 L9.4 7.8" stroke="#B8FFB8" stroke-width="0.8"/></svg>
<svg style="left:196px;top:478px" width="11" height="14" viewBox="0 0 11 14"><path d="M0.5 0.5 H7.5 L10.5 3.5 V13.5 H0.5 Z" fill="#fff" stroke="#000" stroke-width="1.2"/><path d="M7.5 0.5 V3.5 H10.5" fill="#fff" stroke="#000" stroke-width="0.8"/><rect x="2" y="6" width="7" height="4" fill="#00F000"/><rect x="2" y="2" width="1" height="1" fill="#000"/><rect x="4" y="2" width="2" height="1" fill="#000"/><rect x="2" y="4" width="1" height="1" fill="#000"/><rect x="5" y="4" width="1" height="1" fill="#000"/><rect x="2" y="11" width="3" height="1" fill="#000"/><rect x="6" y="11" width="3" height="1" fill="#000"/></svg>
<svg style="left:142px;top:495px" width="19" height="17" viewBox="0 0 19 17"><path d="M10.5 0.6 Q9 0.8 8.1 2.7 Q7.4 3.9 6.1 4.1 Q4.8 3.2 3.7 3.1 Q2.4 3.4 2.4 4.4 Q2.4 5.4 3.1 6.1 Q4.2 7.4 5.4 8.1 Q5 9.2 4.1 9.8 Q2 10.4 0.5 11.2 Q0.4 12 1 12.5 Q2.2 13 3.4 13.2 Q4.4 14.2 5.4 14.9 Q6.8 15.8 8.1 15.9 Q10 15.6 11.5 14.6 Q12.7 13.7 13.5 12.5 Q14.4 11 14.9 9.5 Q15.8 8 16.9 6.8 Q17.7 5.8 17.9 4.8 Q17.7 3.7 16.9 3.4 Q15.8 3.7 14.9 4.4 Q13.8 3.9 13.2 3.1 Q13 1.8 12.2 1 Q11.4 0.6 10.5 0.6 Z" fill="#fff" stroke="#FF0000" stroke-width="1.1" stroke-linejoin="round"/><rect x="9" y="4" width="1" height="2" fill="#000"/><rect x="11" y="4" width="1" height="2" fill="#000"/><rect x="10" y="7" width="2" height="3" fill="#000"/></svg>
<svg style="left:168px;top:495px" width="18" height="17" viewBox="0 0 18 17"><path d="M0.5 5.6 V14.4 C0.5 16.6 9 16.6 9 14.4 V5.6 Z" fill="url(#cg)" stroke="#56664E" stroke-width="0.9"/><ellipse cx="4.75" cy="5.6" rx="4.25" ry="1.5" fill="#DCE2D4" stroke="#56664E" stroke-width="0.9"/><path d="M6.1 0.2 L9.8 3.7 L13.9 0.4 L16.9 3.1 L13.4 6.6 L16.7 10.7 L6.1 11.2 Z" fill="#0FD60F" stroke="#0A5A0A" stroke-width="0.9" stroke-linejoin="round"/><path d="M6.6 1.2 L6.6 10.6 M7 1 L10 4 L14 1" fill="none" stroke="#20F020" stroke-width="0.9"/><path d="M13.9 0.4 L16.9 3.1 L13.4 6.6 L16.7 10.7 L6.1 11.2" fill="none" stroke="#053805" stroke-width="1.1" stroke-linejoin="round"/><path d="M14.2 3 L9.4 7.8" stroke="#B8FFB8" stroke-width="0.8"/></svg>
<svg style="left:196px;top:496px" width="11" height="14" viewBox="0 0 11 14"><path d="M0.5 0.5 H7.5 L10.5 3.5 V13.5 H0.5 Z" fill="#fff" stroke="#000" stroke-width="1.2"/><path d="M7.5 0.5 V3.5 H10.5" fill="#fff" stroke="#000" stroke-width="0.8"/><rect x="2" y="6" width="7" height="4" fill="#00F000"/><rect x="2" y="2" width="1" height="1" fill="#000"/><rect x="4" y="2" width="2" height="1" fill="#000"/><rect x="2" y="4" width="1" height="1" fill="#000"/><rect x="5" y="4" width="1" height="1" fill="#000"/><rect x="2" y="11" width="3" height="1" fill="#000"/><rect x="6" y="11" width="3" height="1" fill="#000"/></svg>
<svg style="left:142px;top:513px" width="19" height="17" viewBox="0 0 19 17"><path d="M10.5 0.6 Q9 0.8 8.1 2.7 Q7.4 3.9 6.1 4.1 Q4.8 3.2 3.7 3.1 Q2.4 3.4 2.4 4.4 Q2.4 5.4 3.1 6.1 Q4.2 7.4 5.4 8.1 Q5 9.2 4.1 9.8 Q2 10.4 0.5 11.2 Q0.4 12 1 12.5 Q2.2 13 3.4 13.2 Q4.4 14.2 5.4 14.9 Q6.8 15.8 8.1 15.9 Q10 15.6 11.5 14.6 Q12.7 13.7 13.5 12.5 Q14.4 11 14.9 9.5 Q15.8 8 16.9 6.8 Q17.7 5.8 17.9 4.8 Q17.7 3.7 16.9 3.4 Q15.8 3.7 14.9 4.4 Q13.8 3.9 13.2 3.1 Q13 1.8 12.2 1 Q11.4 0.6 10.5 0.6 Z" fill="#fff" stroke="#FF0000" stroke-width="1.1" stroke-linejoin="round"/><rect x="9" y="4" width="1" height="2" fill="#000"/><rect x="11" y="4" width="1" height="2" fill="#000"/><rect x="10" y="7" width="2" height="3" fill="#000"/></svg>
<svg style="left:168px;top:513px" width="18" height="17" viewBox="0 0 18 17"><path d="M0.5 5.6 V14.4 C0.5 16.6 9 16.6 9 14.4 V5.6 Z" fill="url(#cg)" stroke="#56664E" stroke-width="0.9"/><ellipse cx="4.75" cy="5.6" rx="4.25" ry="1.5" fill="#DCE2D4" stroke="#56664E" stroke-width="0.9"/><path d="M6.1 0.2 L9.8 3.7 L13.9 0.4 L16.9 3.1 L13.4 6.6 L16.7 10.7 L6.1 11.2 Z" fill="#0FD60F" stroke="#0A5A0A" stroke-width="0.9" stroke-linejoin="round"/><path d="M6.6 1.2 L6.6 10.6 M7 1 L10 4 L14 1" fill="none" stroke="#20F020" stroke-width="0.9"/><path d="M13.9 0.4 L16.9 3.1 L13.4 6.6 L16.7 10.7 L6.1 11.2" fill="none" stroke="#053805" stroke-width="1.1" stroke-linejoin="round"/><path d="M14.2 3 L9.4 7.8" stroke="#B8FFB8" stroke-width="0.8"/></svg>
<svg style="left:196px;top:514px" width="11" height="14" viewBox="0 0 11 14"><path d="M0.5 0.5 H7.5 L10.5 3.5 V13.5 H0.5 Z" fill="#fff" stroke="#000" stroke-width="1.2"/><path d="M7.5 0.5 V3.5 H10.5" fill="#fff" stroke="#000" stroke-width="0.8"/><rect x="2" y="6" width="7" height="4" fill="#00F000"/><rect x="2" y="2" width="1" height="1" fill="#000"/><rect x="4" y="2" width="2" height="1" fill="#000"/><rect x="2" y="4" width="1" height="1" fill="#000"/><rect x="5" y="4" width="1" height="1" fill="#000"/><rect x="2" y="11" width="3" height="1" fill="#000"/><rect x="6" y="11" width="3" height="1" fill="#000"/></svg>
<svg style="left:142px;top:531px" width="19" height="17" viewBox="0 0 19 17"><path d="M10.5 0.6 Q9 0.8 8.1 2.7 Q7.4 3.9 6.1 4.1 Q4.8 3.2 3.7 3.1 Q2.4 3.4 2.4 4.4 Q2.4 5.4 3.1 6.1 Q4.2 7.4 5.4 8.1 Q5 9.2 4.1 9.8 Q2 10.4 0.5 11.2 Q0.4 12 1 12.5 Q2.2 13 3.4 13.2 Q4.4 14.2 5.4 14.9 Q6.8 15.8 8.1 15.9 Q10 15.6 11.5 14.6 Q12.7 13.7 13.5 12.5 Q14.4 11 14.9 9.5 Q15.8 8 16.9 6.8 Q17.7 5.8 17.9 4.8 Q17.7 3.7 16.9 3.4 Q15.8 3.7 14.9 4.4 Q13.8 3.9 13.2 3.1 Q13 1.8 12.2 1 Q11.4 0.6 10.5 0.6 Z" fill="#fff" stroke="#FF0000" stroke-width="1.1" stroke-linejoin="round"/><rect x="9" y="4" width="1" height="2" fill="#000"/><rect x="11" y="4" width="1" height="2" fill="#000"/><rect x="10" y="7" width="2" height="3" fill="#000"/></svg>
<svg style="left:168px;top:531px" width="18" height="17" viewBox="0 0 18 17"><path d="M0.5 5.6 V14.4 C0.5 16.6 9 16.6 9 14.4 V5.6 Z" fill="url(#cg)" stroke="#56664E" stroke-width="0.9"/><ellipse cx="4.75" cy="5.6" rx="4.25" ry="1.5" fill="#DCE2D4" stroke="#56664E" stroke-width="0.9"/><path d="M6.1 0.2 L9.8 3.7 L13.9 0.4 L16.9 3.1 L13.4 6.6 L16.7 10.7 L6.1 11.2 Z" fill="#0FD60F" stroke="#0A5A0A" stroke-width="0.9" stroke-linejoin="round"/><path d="M6.6 1.2 L6.6 10.6 M7 1 L10 4 L14 1" fill="none" stroke="#20F020" stroke-width="0.9"/><path d="M13.9 0.4 L16.9 3.1 L13.4 6.6 L16.7 10.7 L6.1 11.2" fill="none" stroke="#053805" stroke-width="1.1" stroke-linejoin="round"/><path d="M14.2 3 L9.4 7.8" stroke="#B8FFB8" stroke-width="0.8"/></svg>
<svg style="left:195px;top:532px" width="12" height="14" viewBox="0 0 12 14" shape-rendering="crispEdges"><rect x="0.5" y="0.5" width="11" height="13" fill="#fff" stroke="#000"/><rect x="3" y="3" width="2" height="1" fill="#888"/><rect x="6" y="3" width="3" height="1" fill="#888"/><rect x="3" y="5" width="2" height="1" fill="#888"/><rect x="6" y="5" width="3" height="1" fill="#888"/><rect x="3" y="7" width="2" height="1" fill="#888"/><rect x="6" y="7" width="3" height="1" fill="#888"/><rect x="3" y="9" width="2" height="1" fill="#888"/><rect x="6" y="9" width="3" height="1" fill="#888"/></svg>
<svg style="left:168px;top:549px" width="18" height="17" viewBox="0 0 18 17"><path d="M0.5 5.6 V14.4 C0.5 16.6 9 16.6 9 14.4 V5.6 Z" fill="url(#cg)" stroke="#56664E" stroke-width="0.9"/><ellipse cx="4.75" cy="5.6" rx="4.25" ry="1.5" fill="#DCE2D4" stroke="#56664E" stroke-width="0.9"/><path d="M6.1 0.2 L9.8 3.7 L13.9 0.4 L16.9 3.1 L13.4 6.6 L16.7 10.7 L6.1 11.2 Z" fill="#0FD60F" stroke="#0A5A0A" stroke-width="0.9" stroke-linejoin="round"/><path d="M6.6 1.2 L6.6 10.6 M7 1 L10 4 L14 1" fill="none" stroke="#20F020" stroke-width="0.9"/><path d="M13.9 0.4 L16.9 3.1 L13.4 6.6 L16.7 10.7 L6.1 11.2" fill="none" stroke="#053805" stroke-width="1.1" stroke-linejoin="round"/><path d="M14.2 3 L9.4 7.8" stroke="#B8FFB8" stroke-width="0.8"/></svg>
<svg style="left:196px;top:550px" width="11" height="14" viewBox="0 0 11 14"><path d="M0.5 0.5 H7.5 L10.5 3.5 V13.5 H0.5 Z" fill="#fff" stroke="#000" stroke-width="1.2"/><path d="M7.5 0.5 V3.5 H10.5" fill="#fff" stroke="#000" stroke-width="0.8"/><rect x="2" y="6" width="7" height="4" fill="#00F000"/><rect x="2" y="2" width="1" height="1" fill="#000"/><rect x="4" y="2" width="2" height="1" fill="#000"/><rect x="2" y="4" width="1" height="1" fill="#000"/><rect x="5" y="4" width="1" height="1" fill="#000"/><rect x="2" y="11" width="3" height="1" fill="#000"/><rect x="6" y="11" width="3" height="1" fill="#000"/></svg>
<div style="left:151px;top:567px;width:4px;height:1px;background:#F01010;"></div>
<div style="left:174px;top:567px;width:1px;height:1px;background:#087808;"></div>
<div style="left:181px;top:567px;width:3px;height:1px;background:#10D010;"></div>
<div id="txt" style="left:0;top:0;width:740px;height:583px;will-change:transform;">
<span class="t" style="left:25.30px;top:8.15px;font-size:14px;line-height:18px;color:#fff;font-weight:bold;transform:scaleX(0.9061);-webkit-text-stroke:0;text-shadow:1px 1px 0 #0A1883;">Post Replication Auditor</span>
<span class="t" style="left:19.22px;top:35.84px;font-size:12px;line-height:16px;color:#0038E8;transform:scaleX(0.8840);">Options</span>
<span class="t" style="left:17.72px;top:57.84px;font-size:12px;line-height:16px;color:#000;transform:scaleX(0.8788);">Modified (In this file) After</span>
<span class="t" style="left:326.72px;top:57.84px;font-size:12px;line-height:16px;color:#000;transform:scaleX(0.9211);"><u>D</u>ate...</span>
<span class="t" style="left:369.72px;top:57.84px;font-size:12px;line-height:16px;color:#000;transform:scaleX(0.8913);">Clear</span>
<span class="t" style="left:410.72px;top:55.84px;font-size:12px;line-height:16px;color:#000;transform:scaleX(0.8930);">[ - Select a date in the Replication History</span>
<span class="t" style="left:17.72px;top:78.84px;font-size:12px;line-height:16px;color:#000;transform:scaleX(0.8777);">Current Database:</span>
<span class="t" style="left:20.42px;top:99.84px;font-size:12px;line-height:16px;color:#000;transform:scaleX(0.8897);">Factory Repair Records on Local (DemoInit.nsf)</span>
<span class="t" style="left:337.92px;top:96.84px;font-size:12px;line-height:16px;color:#000;transform:scaleX(0.8901);">Database Creation Date:</span>
<span class="t" style="left:465.22px;top:94.84px;font-size:12px;line-height:16px;color:#000;transform:scaleX(0.9388);">18/01/2005 11:46:23 AM</span>
<span class="t" style="left:343.92px;top:124.84px;font-size:12px;line-height:16px;color:#000;transform:scaleX(0.8803);">Deletion Stubs Lifetime:</span>
<span class="t" style="left:465.72px;top:122.84px;font-size:12px;line-height:16px;color:#000;transform:scaleX(1.0159);">90</span>
<span class="t" style="left:534.72px;top:124.84px;font-size:12px;line-height:16px;color:#000;transform:scaleX(0.9349);">Days</span>
<span class="t" style="left:572.92px;top:124.84px;font-size:12px;line-height:16px;color:#000;transform:scaleX(0.9430);">Reset</span>
<span class="t" style="left:673.42px;top:46.84px;font-size:12px;line-height:16px;color:#000;font-weight:bold;"><u>A</u>udit</span>
<span class="t" style="left:674.22px;top:72.84px;font-size:12px;line-height:16px;color:#000;transform:scaleX(0.8983);"><u>C</u>lose</span>
<span class="t" style="left:643.22px;top:124.84px;font-size:12px;line-height:16px;color:#000;transform:scaleX(0.9028);"><u>E</u>xport To File...</span>
<span class="t" style="left:666.72px;top:160.84px;font-size:12px;line-height:16px;color:#0000FF;transform:scaleX(0.9021);">Online Help</span>
<span class="t" style="left:77.72px;top:160.84px;font-size:12px;line-height:16px;color:#000;transform:scaleX(0.9021);"><u>U</u>ngroup All</span>
<span class="t" style="left:158.72px;top:160.84px;font-size:12px;line-height:16px;color:#000;transform:scaleX(0.8825);">Show Filters</span>
<span class="t" style="left:29.72px;top:183.84px;font-size:12px;line-height:16px;color:#000;transform:scaleX(0.9260);">UNID</span>
<span class="t" style="left:83.72px;top:183.84px;font-size:12px;line-height:16px;color:#000;transform:scaleX(0.8981);">Sequence Number</span>
<span class="t" style="left:198.92px;top:183.84px;font-size:12px;line-height:16px;color:#000;transform:scaleX(0.8629);">Modified (Initially)</span>
<span class="t" style="left:306.52px;top:183.84px;font-size:12px;line-height:16px;color:#000;transform:scaleX(0.8695);">Modified (In this file)</span>
<span class="t" style="left:426.22px;top:183.84px;font-size:12px;line-height:16px;color:#000;transform:scaleX(0.9476);">Title</span>
<span class="t" style="left:471.72px;top:183.84px;font-size:12px;line-height:16px;color:#000;transform:scaleX(0.9054);">Modified by</span>
<span class="t" style="left:23.09px;top:216.69px;font-size:11px;line-height:15px;color:#ACA899;">Drag a column header here to group by that content.</span>
<span class="t" style="left:11.09px;top:242.69px;font-size:11px;line-height:15px;color:#000;transform:scaleX(0.9926);">Diff with DB</span>
<span class="t" style="left:76.80px;top:242.69px;font-size:11px;line-height:15px;color:#000;">Diff</span>
<span class="t" style="left:141.09px;top:242.69px;font-size:11px;line-height:15px;color:#000;transform:scaleX(1.1348);">S...</span>
<span class="t" style="left:166.09px;top:242.69px;font-size:11px;line-height:15px;color:#000;transform:scaleX(1.3276);">I...</span>
<span class="t" style="left:191.09px;top:242.69px;font-size:11px;line-height:15px;color:#000;transform:scaleX(1.2155);">T...</span>
<span class="t" style="left:216.09px;top:242.69px;font-size:11px;line-height:15px;color:#000;transform:scaleX(1.0125);">Created (Initially)</span>
<span class="t" style="left:366.09px;top:242.69px;font-size:11px;line-height:15px;color:#000;transform:scaleX(1.0177);">Created (In this file)</span>
<span class="t" style="left:516.08px;top:242.69px;font-size:11px;line-height:15px;color:#000;transform:scaleX(0.9907);">Modified by</span>
<span class="t" style="left:11.50px;top:262.69px;font-size:11px;line-height:15px;color:#000;transform:scaleX(0.9900);">1668</span>
<span class="t" style="left:76.50px;top:262.69px;font-size:11px;line-height:15px;color:#000;transform:scaleX(0.9900);">0</span>
<span class="t" style="left:216.60px;top:262.69px;font-size:11px;line-height:15px;color:#000;transform:scaleX(0.9910);">13/08/2009 3:22:49 PM</span>
<span class="t" style="left:366.60px;top:262.69px;font-size:11px;line-height:15px;color:#000;transform:scaleX(0.9910);">13/08/2009 3:22:49 PM</span>
<span class="t" style="left:516.08px;top:262.69px;font-size:11px;line-height:15px;color:#000;transform:scaleX(0.9653);">Mister Admin/Demo2</span>
<span class="t" style="left:11.50px;top:280.69px;font-size:11px;line-height:15px;color:#000;transform:scaleX(0.9900);">1668</span>
<span class="t" style="left:76.50px;top:280.69px;font-size:11px;line-height:15px;color:#000;transform:scaleX(0.9900);">0</span>
<span class="t" style="left:216.60px;top:280.69px;font-size:11px;line-height:15px;color:#000;transform:scaleX(0.9910);">13/08/2009 3:35:40 PM</span>
<span class="t" style="left:366.60px;top:280.69px;font-size:11px;line-height:15px;color:#000;transform:scaleX(0.9910);">13/08/2009 3:35:40 PM</span>
<span class="t" style="left:516.08px;top:280.69px;font-size:11px;line-height:15px;color:#000;transform:scaleX(0.9653);">Mister Admin/Demo2</span>
<span class="t" style="left:11.50px;top:298.69px;font-size:11px;line-height:15px;color:#000;transform:scaleX(0.9900);">0</span>
<span class="t" style="left:76.50px;top:298.69px;font-size:11px;line-height:15px;color:#000;transform:scaleX(0.9900);">2776</span>
<span class="t" style="left:216.60px;top:298.69px;font-size:11px;line-height:15px;color:#000;transform:scaleX(0.9910);">12/06/1997 1:39:49 PM</span>
<span class="t" style="left:366.60px;top:298.69px;font-size:11px;line-height:15px;color:#000;transform:scaleX(1.0080);">18/01/2005 11:46:25 AM</span>
<span class="t" style="left:516.08px;top:298.69px;font-size:11px;line-height:15px;color:#000;transform:scaleX(0.9653);">Mister Admin/Demo2</span>
<span class="t" style="left:11.50px;top:316.69px;font-size:11px;line-height:15px;color:#000;transform:scaleX(0.9900);">1680</span>
<span class="t" style="left:76.50px;top:316.69px;font-size:11px;line-height:15px;color:#000;transform:scaleX(0.9900);">0</span>
<span class="t" style="left:216.60px;top:316.69px;font-size:11px;line-height:15px;color:#000;transform:scaleX(0.9910);">26/08/2009 12:07:46 PM</span>
<span class="t" style="left:366.60px;top:316.69px;font-size:11px;line-height:15px;color:#000;transform:scaleX(0.9910);">26/08/2009 12:07:46 PM</span>
<span class="t" style="left:516.08px;top:316.69px;font-size:11px;line-height:15px;color:#000;transform:scaleX(0.9470);">Peter WOODFORD/YTRIA</span>
<span class="t" style="left:11.50px;top:334.69px;font-size:11px;line-height:15px;color:#000;transform:scaleX(0.9900);">1693</span>
<span class="t" style="left:76.50px;top:334.69px;font-size:11px;line-height:15px;color:#000;transform:scaleX(0.9900);">686</span>
<span class="t" style="left:216.60px;top:334.69px;font-size:11px;line-height:15px;color:#000;transform:scaleX(0.9910);">22/10/2007 6:10:52 PM</span>
<span class="t" style="left:366.60px;top:334.69px;font-size:11px;line-height:15px;color:#000;transform:scaleX(0.9910);">08/09/2009 12:45:03 PM</span>
<span class="t" style="left:516.08px;top:334.69px;font-size:11px;line-height:15px;color:#000;transform:scaleX(0.9470);">Peter WOODFORD/YTRIA</span>
<span class="t" style="left:11.50px;top:352.69px;font-size:11px;line-height:15px;color:#000;transform:scaleX(0.9900);">1693</span>
<span class="t" style="left:76.50px;top:352.69px;font-size:11px;line-height:15px;color:#000;transform:scaleX(0.9900);">686</span>
<span class="t" style="left:216.60px;top:352.69px;font-size:11px;line-height:15px;color:#000;transform:scaleX(0.9910);">22/10/2007 4:55:11 PM</span>
<span class="t" style="left:366.60px;top:352.69px;font-size:11px;line-height:15px;color:#000;transform:scaleX(0.9910);">08/09/2009 12:45:03 PM</span>
<span class="t" style="left:516.08px;top:352.69px;font-size:11px;line-height:15px;color:#000;transform:scaleX(0.9470);">Peter WOODFORD/YTRIA</span>
<span class="t" style="left:11.50px;top:370.69px;font-size:11px;line-height:15px;color:#000;transform:scaleX(0.9900);">1693</span>
<span class="t" style="left:76.50px;top:370.69px;font-size:11px;line-height:15px;color:#000;transform:scaleX(0.9900);">1659</span>
<span class="t" style="left:216.60px;top:370.69px;font-size:11px;line-height:15px;color:#000;transform:scaleX(0.9910);">21/02/2005 6:07:09 PM</span>
<span class="t" style="left:366.60px;top:370.69px;font-size:11px;line-height:15px;color:#000;transform:scaleX(0.9910);">08/09/2009 12:45:03 PM</span>
<span class="t" style="left:516.08px;top:370.69px;font-size:11px;line-height:15px;color:#000;transform:scaleX(0.9022);">Eric HOUVENAGHEL/YTRIA</span>
<span class="t" style="left:11.50px;top:388.69px;font-size:11px;line-height:15px;color:#000;transform:scaleX(0.9900);">1693</span>
<span class="t" style="left:76.50px;top:388.69px;font-size:11px;line-height:15px;color:#000;transform:scaleX(0.9900);">164</span>
<span class="t" style="left:216.60px;top:388.69px;font-size:11px;line-height:15px;color:#000;transform:scaleX(0.9910);">27/03/2009 4:35:01 PM</span>
<span class="t" style="left:366.60px;top:388.69px;font-size:11px;line-height:15px;color:#000;transform:scaleX(0.9910);">08/09/2009 12:45:03 PM</span>
<span class="t" style="left:516.08px;top:388.69px;font-size:11px;line-height:15px;color:#000;transform:scaleX(0.9470);">Peter WOODFORD/YTRIA</span>
<span class="t" style="left:11.50px;top:406.69px;font-size:11px;line-height:15px;color:#000;transform:scaleX(0.9900);">1693</span>
<span class="t" style="left:76.50px;top:406.69px;font-size:11px;line-height:15px;color:#000;transform:scaleX(0.9900);">516</span>
<span class="t" style="left:216.60px;top:406.69px;font-size:11px;line-height:15px;color:#000;transform:scaleX(0.9910);">09/04/2008 4:56:00 PM</span>
<span class="t" style="left:366.60px;top:406.69px;font-size:11px;line-height:15px;color:#000;transform:scaleX(0.9910);">08/09/2009 12:45:03 PM</span>
<span class="t" style="left:516.08px;top:406.69px;font-size:11px;line-height:15px;color:#000;transform:scaleX(0.9470);">Peter WOODFORD/YTRIA</span>
<span class="t" style="left:11.50px;top:424.69px;font-size:11px;line-height:15px;color:#000;transform:scaleX(0.9900);">1693</span>
<span class="t" style="left:76.50px;top:424.69px;font-size:11px;line-height:15px;color:#000;transform:scaleX(0.9900);">271</span>
<span class="t" style="left:216.60px;top:424.69px;font-size:11px;line-height:15px;color:#000;transform:scaleX(0.9910);">10/12/2008 5:21:04 PM</span>
<span class="t" style="left:366.60px;top:424.69px;font-size:11px;line-height:15px;color:#000;transform:scaleX(0.9910);">08/09/2009 12:45:03 PM</span>
<span class="t" style="left:516.08px;top:424.69px;font-size:11px;line-height:15px;color:#000;transform:scaleX(0.9470);">Peter WOODFORD/YTRIA</span>
<span class="t" style="left:11.50px;top:442.69px;font-size:11px;line-height:15px;color:#000;transform:scaleX(0.9900);">1693</span>
<span class="t" style="left:76.50px;top:442.69px;font-size:11px;line-height:15px;color:#000;transform:scaleX(0.9900);">523</span>
<span class="t" style="left:216.60px;top:442.69px;font-size:11px;line-height:15px;color:#000;transform:scaleX(0.9910);">03/04/2008 12:22:25 PM</span>
<span class="t" style="left:366.60px;top:442.69px;font-size:11px;line-height:15px;color:#000;transform:scaleX(0.9910);">08/09/2009 12:45:03 PM</span>
<span class="t" style="left:516.08px;top:442.69px;font-size:11px;line-height:15px;color:#000;transform:scaleX(0.9470);">Peter WOODFORD/YTRIA</span>
<span class="t" style="left:11.50px;top:460.69px;font-size:11px;line-height:15px;color:#000;transform:scaleX(0.9900);">1693</span>
<span class="t" style="left:76.50px;top:460.69px;font-size:11px;line-height:15px;color:#000;transform:scaleX(0.9900);">712</span>
<span class="t" style="left:216.60px;top:460.69px;font-size:11px;line-height:15px;color:#000;transform:scaleX(1.0080);">27/09/2007 10:39:58 AM</span>
<span class="t" style="left:366.60px;top:460.69px;font-size:11px;line-height:15px;color:#000;transform:scaleX(0.9910);">08/09/2009 12:45:03 PM</span>
<span class="t" style="left:516.08px;top:460.69px;font-size:11px;line-height:15px;color:#000;transform:scaleX(0.9470);">Peter WOODFORD/YTRIA</span>
<span class="t" style="left:11.50px;top:478.69px;font-size:11px;line-height:15px;color:#000;transform:scaleX(0.9900);">1693</span>
<span class="t" style="left:76.50px;top:478.69px;font-size:11px;line-height:15px;color:#000;transform:scaleX(0.9900);">963</span>
<span class="t" style="left:216.60px;top:478.69px;font-size:11px;line-height:15px;color:#000;transform:scaleX(0.9910);">18/01/2007 6:33:16 PM</span>
<span class="t" style="left:366.60px;top:478.69px;font-size:11px;line-height:15px;color:#000;transform:scaleX(0.9910);">08/09/2009 12:45:03 PM</span>
<span class="t" style="left:516.08px;top:478.69px;font-size:11px;line-height:15px;color:#000;transform:scaleX(0.9470);">Peter WOODFORD/YTRIA</span>
<span class="t" style="left:11.50px;top:496.69px;font-size:11px;line-height:15px;color:#000;transform:scaleX(0.9900);">1693</span>
<span class="t" style="left:76.50px;top:496.69px;font-size:11px;line-height:15px;color:#000;transform:scaleX(0.9900);">118</span>
<span class="t" style="left:216.60px;top:496.69px;font-size:11px;line-height:15px;color:#000;transform:scaleX(0.9910);">12/05/2009 4:44:12 PM</span>
<span class="t" style="left:366.60px;top:496.69px;font-size:11px;line-height:15px;color:#000;transform:scaleX(0.9910);">08/09/2009 12:45:03 PM</span>
<span class="t" style="left:516.08px;top:496.69px;font-size:11px;line-height:15px;color:#000;transform:scaleX(0.9470);">Peter WOODFORD/YTRIA</span>
<span class="t" style="left:11.50px;top:514.69px;font-size:11px;line-height:15px;color:#000;transform:scaleX(0.9900);">1693</span>
<span class="t" style="left:76.50px;top:514.69px;font-size:11px;line-height:15px;color:#000;transform:scaleX(0.9900);">671</span>
<span class="t" style="left:216.60px;top:514.69px;font-size:11px;line-height:15px;color:#000;transform:scaleX(0.9910);">06/11/2007 2:00:52 PM</span>
<span class="t" style="left:366.60px;top:514.69px;font-size:11px;line-height:15px;color:#000;transform:scaleX(0.9910);">08/09/2009 12:45:03 PM</span>
<span class="t" style="left:516.08px;top:514.69px;font-size:11px;line-height:15px;color:#000;transform:scaleX(0.9470);">Peter WOODFORD/YTRIA</span>
<span class="t" style="left:11.50px;top:532.69px;font-size:11px;line-height:15px;color:#000;transform:scaleX(0.9900);">1693</span>
<span class="t" style="left:76.50px;top:532.69px;font-size:11px;line-height:15px;color:#000;transform:scaleX(0.9900);">612</span>
<span class="t" style="left:216.60px;top:532.69px;font-size:11px;line-height:15px;color:#000;transform:scaleX(0.9910);">04/01/2008 12:08:08 PM</span>
<span class="t" style="left:366.60px;top:532.69px;font-size:11px;line-height:15px;color:#000;transform:scaleX(0.9910);">08/09/2009 12:45:03 PM</span>
<span class="t" style="left:516.08px;top:532.69px;font-size:11px;line-height:15px;color:#000;transform:scaleX(0.9470);">Peter WOODFORD/YTRIA</span>
<span class="t" style="left:11.50px;top:550.69px;font-size:11px;line-height:15px;color:#000;transform:scaleX(0.9900);">1693</span>
<span class="t" style="left:76.50px;top:550.69px;font-size:11px;line-height:15px;color:#000;transform:scaleX(0.9900);">29</span>
<span class="t" style="left:216.60px;top:550.69px;font-size:11px;line-height:15px;color:#000;transform:scaleX(1.0080);">10/08/2009 11:55:48 AM</span>
<span class="t" style="left:366.60px;top:550.69px;font-size:11px;line-height:15px;color:#000;transform:scaleX(0.9910);">08/09/2009 12:45:03 PM</span>
<span class="t" style="left:516.08px;top:550.69px;font-size:11px;line-height:15px;color:#000;transform:scaleX(0.9653);">Mister Admin/Demo2</span>
</div>
</body></html>
